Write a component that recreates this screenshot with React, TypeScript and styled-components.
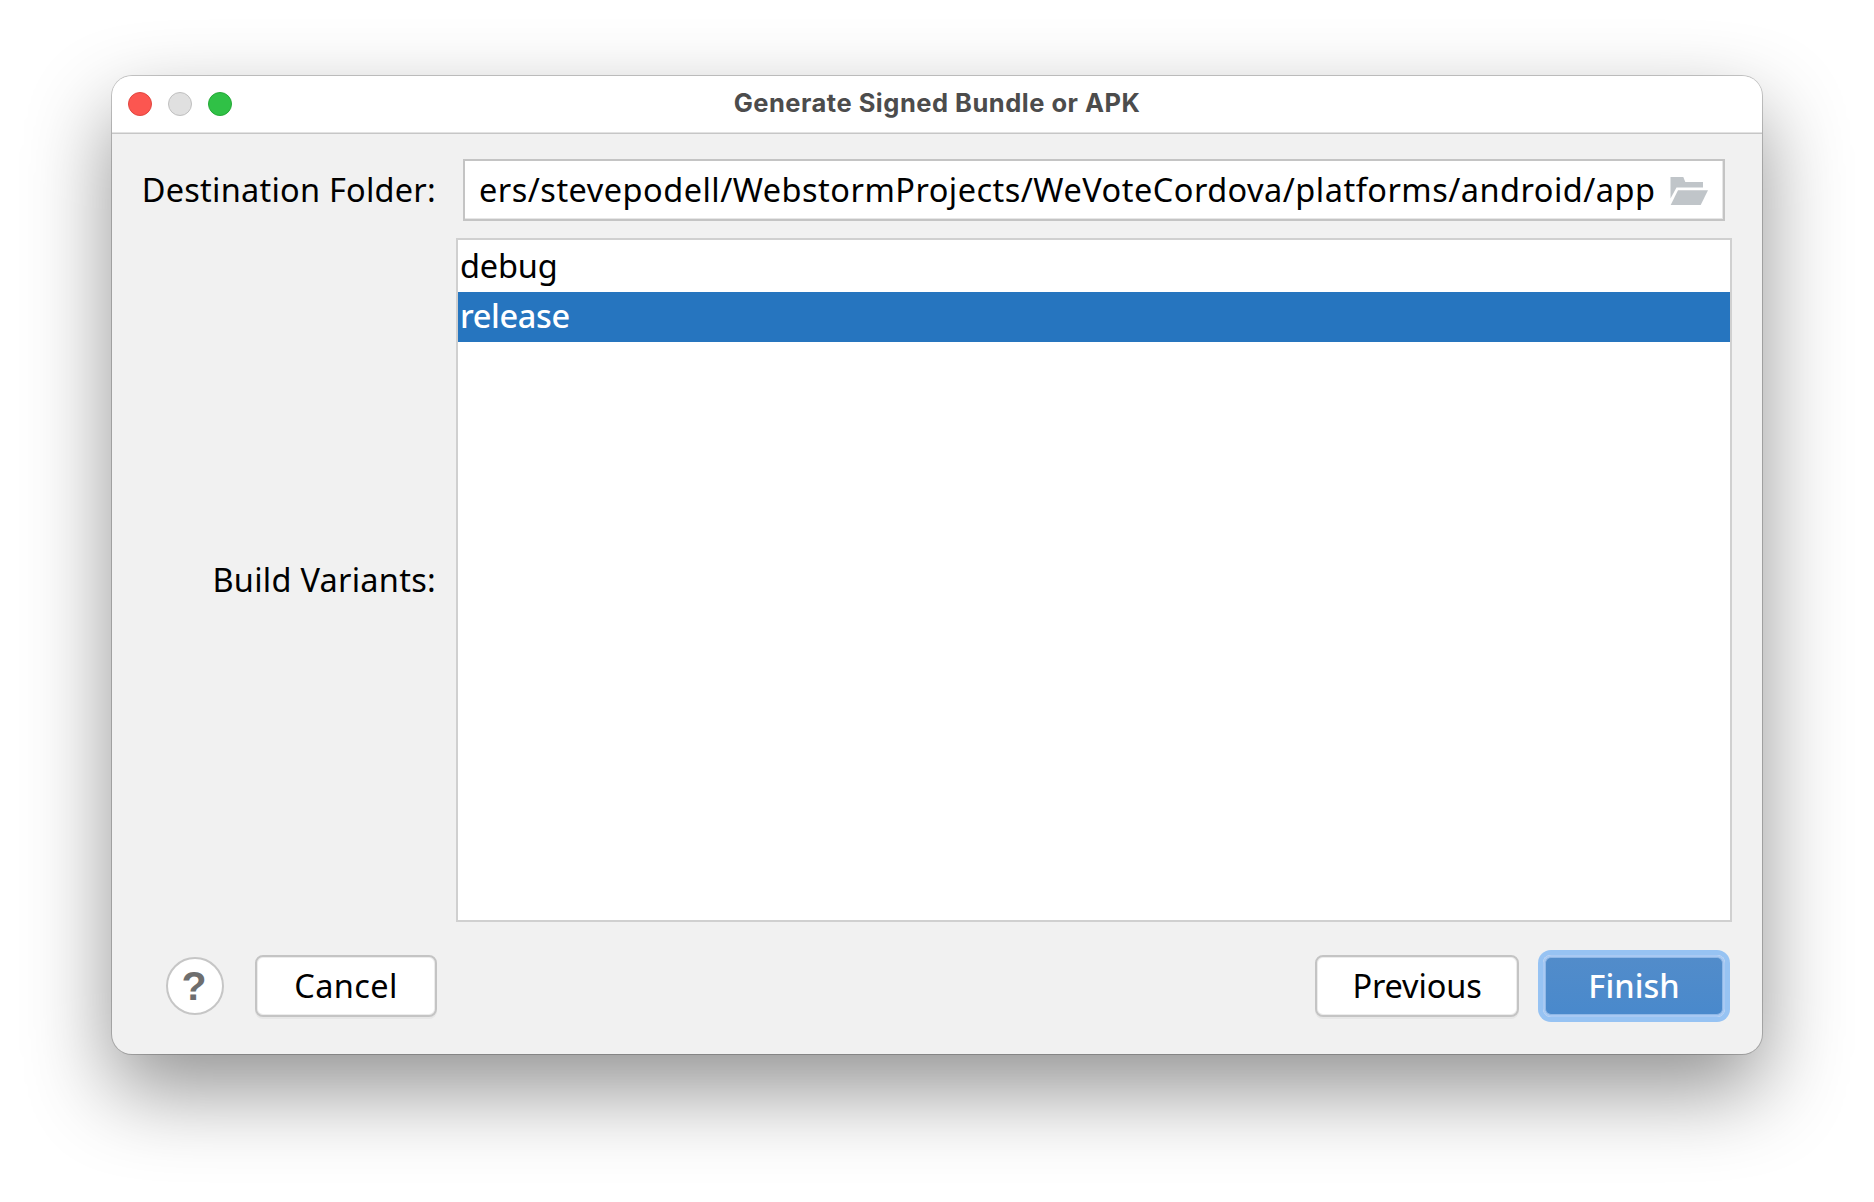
import React from 'react';
import styled, { createGlobalStyle } from 'styled-components';

const uiFont = `'Lucida Grande', 'Noto Sans', 'Open Sans', sans-serif`;

const GlobalStyle = createGlobalStyle`
  *, *::before, *::after { box-sizing: border-box; }
  html, body { margin: 0; padding: 0; }
  body { background: #fff; font-family: ${uiFont}; overflow: hidden; }
`;

const Desktop = styled.main`
  width: 1874px;
  height: 1202px;
  padding: 76px 112px 0;
`;

const Dialog = styled.section`
  display: flex;
  flex-direction: column;
  width: 1650px;
  height: 978px;
  border-radius: 20px;
  background: #f1f1f1;
  box-shadow: 0 0 0 1px rgba(0, 0, 0, 0.2), 0 36px 84px rgba(0, 0, 0, 0.43);
`;

const TitleBar = styled.header`
  display: grid;
  grid-template-columns: 200px 1fr 200px;
  align-items: center;
  height: 58px;
  flex: none;
  padding: 0 0 2px;
  background: #fff;
  border-radius: 20px 20px 0 0;
  box-shadow: inset 0 -1px 0 #c6c6c6, inset 0 -2px 0 #e2e2e2;
`;

const Lights = styled.div`
  display: flex;
  gap: 16px;
  padding-left: 16px;
`;

const Light = styled.span<{ $fill: string; $edge: string }>`
  width: 24px;
  height: 24px;
  border-radius: 50%;
  background: ${p => p.$fill};
  border: 1px solid ${p => p.$edge};
`;

const Title = styled.h1`
  margin: 0;
  padding-bottom: 2px;
  text-align: center;
  font: 700 25.5px/32px Inter, sans-serif;
  letter-spacing: 0.5px;
  color: #4c4c4c;
  white-space: nowrap;
`;

const Form = styled.div`
  display: grid;
  grid-template-columns: 344px 1276px;
  grid-template-rows: 62px 684px;
  row-gap: 17px;
  padding-top: 25px;
`;

const Text = styled.span<{ $spacing?: number }>`
  font-family: ${uiFont};
  font-size: 32.5px;
  line-height: 44px;
  letter-spacing: ${p => p.$spacing ?? 0}px;
  white-space: nowrap;
`;

const Label = styled.label`
  display: flex;
  align-items: center;
  justify-content: flex-end;
  padding-right: 20px;
  color: #000;
`;

const PathField = styled.div`
  display: flex;
  align-items: center;
  width: 1262px;
  height: 62px;
  margin-left: 7px;
  padding-left: 14px;
  background: #fff;
  border: 2px solid #c4c4c4;
  box-shadow: inset -1px -1px 0 #e6e6e6;
`;

const PathText = styled.div`
  flex: none;
  width: 1191px;
`;

const FolderIcon = styled.svg`
  flex: none;
  width: 38px;
  height: 28px;
  margin-top: 2px;
`;

const VariantList = styled.ul`
  margin: 0;
  padding: 2px 0 0;
  list-style: none;
  background: #fff;
  border: 2px solid #d0d0d0;
`;

const VariantRow = styled.li<{ $selected?: boolean }>`
  display: flex;
  align-items: center;
  height: 50px;
  padding: 0 0 2px 2px;
  color: ${p => (p.$selected ? '#fff' : '#000')};
  background: ${p => (p.$selected ? '#2675bf' : 'transparent')};
  font-weight: ${p => (p.$selected ? 500 : 400)};
`;

const Footer = styled.footer`
  display: flex;
  align-items: center;
  height: 72px;
  margin-top: 28px;
  padding: 0 37px 0 54px;
`;

const HelpButton = styled.button`
  width: 58px;
  height: 58px;
  padding: 0 2px 0 0;
  margin-right: 31px;
  border: 2px solid #c6c6c6;
  border-radius: 50%;
  background: #fff;
  color: #6e6e6e;
  font: 700 41px/54px 'Liberation Sans', Arial, sans-serif;
`;

const PushButton = styled.button<{ $width: number }>`
  width: ${p => p.$width}px;
  height: 62px;
  padding: 0;
  border: 2px solid #c4c4c4;
  border-radius: 8px;
  background: #fff;
  box-shadow: inset 0 0 0 1px #ececec, 0 2px 0 #e7e7e7;
  color: #000;
`;

const DefaultButton = styled(PushButton)`
  margin-left: 24px;
  border-color: #a8c9f3;
  background: linear-gradient(#528cca, #4989cc) padding-box;
  box-shadow: inset 0 0 0 1px #8fb8e7, 0 0 0 5px #97c3f3;
  color: #fff;
  font-weight: 500;
`;

const Spacer = styled.div`
  flex: 1;
`;

export default function App() {
  return (
    <>
      <GlobalStyle />
      <Desktop>
        <Dialog>
          <TitleBar>
            <Lights>
              <Light $fill="#fc5650" $edge="#e2463f" />
              <Light $fill="#e0e0e0" $edge="#c0c0c0" />
              <Light $fill="#30c146" $edge="#24a936" />
            </Lights>
            <Title>Generate Signed Bundle or APK</Title>
          </TitleBar>
          <Form>
            <Label><Text $spacing={0.24}>Destination Folder:</Text></Label>
            <PathField>
              <PathText>
                <Text $spacing={0.48}>ers/stevepodell/WebstormProjects/WeVoteCordova/platforms/android/app</Text>
              </PathText>
              <FolderIcon viewBox="0 0 38 28">
                <path d="M0.5 0H13.3L15.3 5H33V10.5H6.5L0.5 21.5Z" fill="#c0c5c9" />
                <path d="M8 13.2H38L30.7 28H0.7Z" fill="#c0c5c9" />
              </FolderIcon>
            </PathField>
            <Label><Text $spacing={0.26}>Build Variants:</Text></Label>
            <VariantList>
              <VariantRow><Text $spacing={-0.15}>debug</Text></VariantRow>
              <VariantRow $selected><Text $spacing={-0.35}>release</Text></VariantRow>
            </VariantList>
          </Form>
          <Footer>
            <HelpButton>?</HelpButton>
            <PushButton $width={182}><Text $spacing={0.4}>Cancel</Text></PushButton>
            <Spacer />
            <PushButton $width={204}><Text $spacing={-0.15}>Previous</Text></PushButton>
            <DefaultButton $width={182}><Text>Finish</Text></DefaultButton>
          </Footer>
        </Dialog>
      </Desktop>
    </>
  );
}
